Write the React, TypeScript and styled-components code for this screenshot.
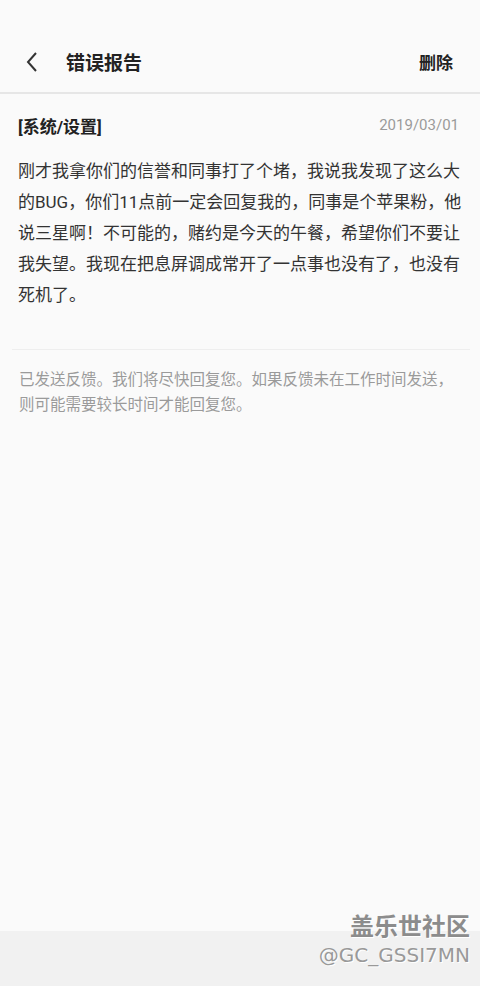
import React from 'react'
import styled, { createGlobalStyle } from 'styled-components'

const GlobalStyle = createGlobalStyle`
  html, body {
    margin: 0;
    padding: 0;
    background: #fafafa;
  }
  body {
    font-family: Roboto, "Noto Sans CJK SC", "Noto Sans", sans-serif;
    color: #333;
  }
`

const Page = styled.div`
  position: relative;
  width: 480px;
  height: 986px;
  display: flex;
  flex-direction: column;
  background: #fafafa;
  overflow: hidden;
`

const TopBar = styled.header`
  display: flex;
  align-items: center;
  height: 61px;
  margin-top: 31px;
  padding: 0 27px 0 22px;
  border-bottom: 2px solid #e6e6e6;
`

const BackButton = styled.button`
  display: flex;
  align-items: center;
  justify-content: center;
  width: 20px;
  height: 24px;
  padding: 0;
  border: none;
  background: none;
  margin-right: 24px;
`

const Title = styled.h1`
  flex: 1;
  margin: 0;
  font-size: 19px;
  font-weight: 700;
  color: #222;
`

const Action = styled.span`
  font-size: 17px;
  font-weight: 700;
  color: #222;
`

const Report = styled.section`
  padding: 16px 12px 0 18px;
`

const MetaRow = styled.div`
  display: flex;
  align-items: center;
  justify-content: space-between;
  height: 30px;
  padding-right: 9px;
`

const Category = styled.span`
  font-size: 17px;
  font-weight: 700;
  color: #222;
`

const DateText = styled.span`
  font-family: Roboto, sans-serif;
  font-size: 15px;
  color: #9a9a9a;
`

const Body = styled.p`
  margin: 16px 0 0;
  font-size: 17px;
  line-height: 31px;
  color: #333;
  white-space: nowrap;
`

const Divider = styled.hr`
  margin: 38px 10px 0 12px;
  border: none;
  border-top: 1px solid #eeeeee;
`

const Note = styled.p`
  margin: 18px 18px 0 19px;
  font-size: 15.5px;
  line-height: 25px;
  color: #9a9a9a;
`

const Spacer = styled.div`
  flex: 1;
`

const BottomBar = styled.div`
  height: 55px;
  background: #f1f1f1;
`

const Watermark = styled.div`
  position: absolute;
  right: 10px;
  bottom: 16px;
  display: flex;
  flex-direction: column;
  align-items: flex-end;
  color: #8a8a8a;
  text-shadow: 1px 1px 0 #fff;
`

const MarkTitle = styled.span`
  font-family: "Noto Sans CJK SC", sans-serif;
  font-size: 24px;
  line-height: 30px;
  font-weight: 700;
  color: #8c8c8c;
`

const MarkId = styled.span`
  font-family: "DejaVu Sans", sans-serif;
  font-size: 20px;
  line-height: 30px;
  color: #999;
`

const lines = [
  '刚才我拿你们的信誉和同事打了个堵，我说我发现了这么大',
  '的BUG，你们11点前一定会回复我的，同事是个苹果粉，他',
  '说三星啊！不可能的，赌约是今天的午餐，希望你们不要让',
  '我失望。我现在把息屏调成常开了一点事也没有了，也没有',
  '死机了。',
]

export default function App() {
  return (
    <Page>
      <GlobalStyle />
      <TopBar>
        <BackButton aria-label="back">
          <svg width="14" height="20" viewBox="0 0 14 20">
            <path d="M11 1 L3 10 L11 19" fill="none" stroke="#333" strokeWidth="2" />
          </svg>
        </BackButton>
        <Title>错误报告</Title>
        <Action>删除</Action>
      </TopBar>
      <Report>
        <MetaRow>
          <Category>[系统/设置]</Category>
          <DateText>2019/03/01</DateText>
        </MetaRow>
        <Body>
          {lines.map((line, i) => (
            <React.Fragment key={i}>
              {line}
              {i < lines.length - 1 && <br />}
            </React.Fragment>
          ))}
        </Body>
      </Report>
      <Divider />
      <Note>已发送反馈。我们将尽快回复您。如果反馈未在工作时间发送，则可能需要较长时间才能回复您。</Note>
      <Spacer />
      <BottomBar />
      <Watermark>
        <MarkTitle>盖乐世社区</MarkTitle>
        <MarkId>@GC_GSSI7MN</MarkId>
      </Watermark>
    </Page>
  )
}
